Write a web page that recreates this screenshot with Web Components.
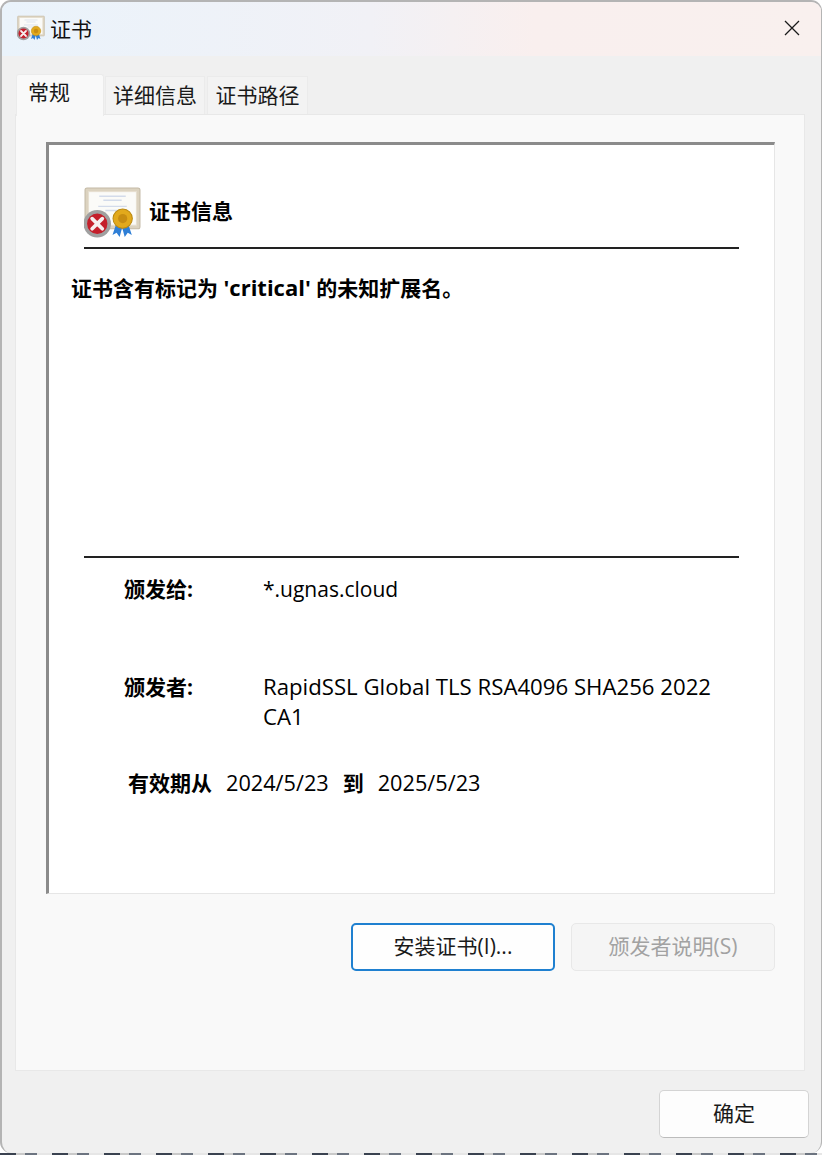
<!DOCTYPE html>
<html lang="zh-CN">
<head>
<meta charset="utf-8">
<title>证书</title>
<style>
html,body{margin:0;padding:0;height:100%}
html{background:#fff}
body{font-family:"Open Sans","Noto Sans CJK SC",sans-serif;overflow:hidden;
  background:repeating-linear-gradient(90deg,#3a4250 0 16px,#c9c9c9 16px 25px,#6c7480 25px 37px,#e6e6e6 37px 52px) left bottom/100% 2px no-repeat}
</style>
</head>
<body>
<template id="icon-tpl">
<svg viewBox="0 0 56 50" width="100%" height="100%">
  <rect x="1" y="1" width="54" height="40" rx="2" fill="#dcd3c0" stroke="#c4baa6"/>
  <rect x="4.500" y="4.500" width="47" height="33" fill="#fbfbf8" stroke="#e6dfd0"/>
  <path d="M15 9h26M19 13h18M14 19h28M21 23h14" stroke="#d3dbea" stroke-width="1.400"/>
  <path d="M32 35l-4 12 4-2 3 4 3-11zM43 35l4 12-4-2-3 4-3-11z" fill="#2f7fd6"/>
  <circle cx="38" cy="31" r="9.500" fill="#e2a91c" stroke="#bb8a12"/>
  <circle cx="38" cy="31" r="4.500" fill="#c78d12"/>
  <circle cx="13" cy="36" r="13.500" fill="#a0a0a0"/>
  <circle cx="13" cy="36" r="10" fill="#c41f2b"/>
  <path d="M8 31l10 10M18 31L8 41" stroke="#f6eeee" stroke-width="3.600" stroke-linecap="round"/>
</svg>
</template>

<cert-dialog></cert-dialog>

<script>
class CertIcon extends HTMLElement {
  connectedCallback() {
    if (this.shadowRoot) return;
    const root = this.attachShadow({ mode: 'open' });
    root.innerHTML = '<style>:host{display:block;flex:none}</style>';
    root.appendChild(document.getElementById('icon-tpl').content.cloneNode(true));
  }
}
customElements.define('cert-icon', CertIcon);

class CertButton extends HTMLElement {
  connectedCallback() {
    if (this.shadowRoot) return;
    const root = this.attachShadow({ mode: 'open' });
    root.innerHTML = `<style>
:host{display:flex;align-items:center;justify-content:center;box-sizing:border-box;height:48px;width:204px;padding-bottom:4px;border-radius:5px;background:#fdfdfd;border:1px solid #d4d4d4;border-bottom-color:#bcbcbc;font-size:21px;color:#1a1a1a}
:host([focused]){border:2px solid #1f80d0;background:#fefefe}
:host([disabled]){background:#f5f5f5;border-color:#e8e8e8;color:#a2a2a2}
</style><slot></slot>`;
  }
}
customElements.define('cert-button', CertButton);

class CertTabs extends HTMLElement {
  connectedCallback() {
    if (this.shadowRoot) return;
    const root = this.attachShadow({ mode: 'open' });
    root.innerHTML = `<style>
:host{display:flex;align-items:flex-end;gap:1px;padding-left:14px;height:42px;position:relative;z-index:1;font-size:21px;color:#1a1a1a}
.t{box-sizing:border-box;height:38px;margin-bottom:1px;padding-bottom:3px;background:#f3f3f3;border:1px solid #ebebeb;border-bottom:0;display:flex;align-items:center;justify-content:center}
.t.a{height:42px;margin-bottom:-1px;width:88px;background:#f9f9f9;padding:0 22px 10px 0;border-radius:3px 3px 0 0}
.w{width:100px}
</style>
<div class="t a">常规</div><div class="t w">详细信息</div><div class="t w" style="margin-left:1px;width:101px">证书路径</div>`;
  }
}
customElements.define('cert-tabs', CertTabs);

class CertInfo extends HTMLElement {
  connectedCallback() {
    if (this.shadowRoot) return;
    const root = this.attachShadow({ mode: 'open' });
    root.innerHTML = `<style>
:host{display:block;box-sizing:border-box;width:729px;height:752px;background:#fff;border-style:solid;border-width:3px 1px 1px 3px;border-color:#8b8b8b #e6e6e6 #e6e6e6 #8b8b8b;color:#000;font-size:21px;padding-left:35px;padding-right:35px}
.head{display:flex;align-items:center;gap:8px;height:104px;box-sizing:border-box;padding-top:33px;border-bottom:2px solid #222}
.head cert-icon{width:57px;height:51px}
.head b{font-size:21px;margin-top:-5px}
.msg{margin:20px 0 0 -13px;font-weight:700;line-height:36px}
.msg span{font-size:22px}
.rule{border-top:2px solid #222;margin-top:250px}
dl{margin:16px 0 0;padding:0}
.row{display:grid;grid-template-columns:139px 1fr;padding-left:40px;line-height:30px}
dt{font-weight:700}
dd{margin:0;font-size:21px}
dd.long{font-size:22.200px}
.row+.row{margin-top:68px}
.valid{margin-top:36px;padding-left:44px;display:flex;gap:14px;line-height:30px;white-space:pre}
.valid b{font-weight:700}
.valid span{font-size:21.700px}
</style>
<div class="head"><cert-icon></cert-icon><b>证书信息</b></div>
<div class="msg">证书含有标记为 <span>'critical'</span> 的未知扩展名。</div>
<div class="rule"></div>
<dl>
<div class="row"><dt>颁发给:</dt><dd>*.ugnas.cloud</dd></div>
<div class="row"><dt>颁发者:</dt><dd class="long">RapidSSL Global TLS RSA4096 SHA256 2022 CA1</dd></div>
</dl>
<div class="valid"><b>有效期从</b><span>2024/5/23</span><b>到</b><span>2025/5/23</span></div>`;
  }
}
customElements.define('cert-info', CertInfo);

class CertDialog extends HTMLElement {
  connectedCallback() {
    if (this.shadowRoot) return;
    const root = this.attachShadow({ mode: 'open' });
    root.innerHTML = `<style>
:host{display:flex;flex-direction:column;box-sizing:border-box;width:822px;height:1153px;background:#f0f0f0;border:1px solid #b4b4b4;border-width:2px 1px 0 2px;border-radius:11px;overflow:hidden}
.title{height:54px;box-sizing:border-box;flex:none;display:flex;align-items:center;padding:0 10px 2px 15px;background:linear-gradient(90deg,#eaf3fb 0,#f1f1f6 45%,#f9efee 65%,#f9f0ee 100%);font-size:21px;color:#111}
.title cert-icon{width:28px;height:26px;margin-right:5px}
.title span{flex:1}
.x{width:18px;height:18px;margin-right:10px}
.body{flex:1;display:flex;flex-direction:column;padding-top:17px}
.panel{box-sizing:border-box;margin-left:13px;margin-top:-1px;width:790px;height:957px;background:#f9f9f9;border:1px solid #e8e8e8;padding:27px 29px 0 30px}
.acts{display:flex;justify-content:flex-end;gap:16px;margin-top:29px}
.foot{display:flex;justify-content:flex-end;padding:19px 12px 0 0}
.foot cert-button{width:150px}
</style>
<div class="title"><cert-icon></cert-icon><span>证书</span>
<svg class="x" viewBox="0 0 18 18"><path d="M2 2l14 14M16 2L2 16" stroke="#1a1a1a" stroke-width="1.300" fill="none"/></svg></div>
<div class="body">
<cert-tabs></cert-tabs>
<div class="panel">
<cert-info></cert-info>
<div class="acts"><cert-button focused>安装证书(I)...</cert-button><cert-button disabled>颁发者说明(S)</cert-button></div>
</div>
<div class="foot"><cert-button>确定</cert-button></div>
</div>`;
  }
}
customElements.define('cert-dialog', CertDialog);
</script>
</body>
</html>
